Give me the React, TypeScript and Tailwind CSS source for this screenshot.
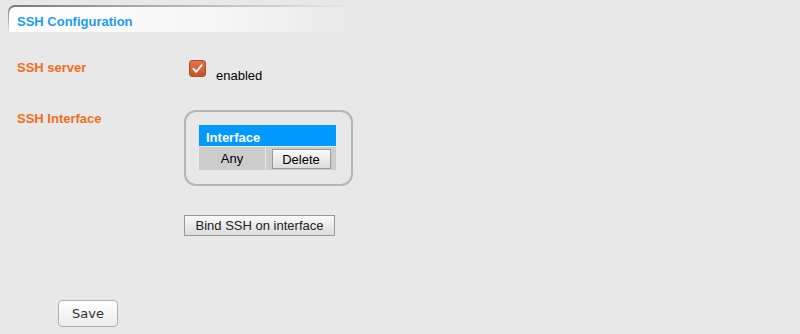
import React from 'react';

function Check() {
  return (
    <span className="flex h-[17px] w-[17px] items-center justify-center rounded-[3px] border border-[#a8502e] bg-gradient-to-b from-[#e0744a] to-[#c5532c]">
      <svg viewBox="0 0 16 16" className="h-[13px] w-[13px]">
        <path d="M3 8.5 L6.5 12 L13 4" fill="none" stroke="#fff" strokeWidth="2.4" strokeLinecap="round" strokeLinejoin="round" />
      </svg>
    </span>
  );
}

export default function App() {
  return (
    <div className="h-[334px] w-[800px] bg-[#e8e8e8] font-['Liberation_Sans',Arial,sans-serif] text-[13px] text-black">
      {/* title tab: border fades out to the right and downward */}
      <div className="pl-[8px] pt-[5px]">
        <div className="h-[27px] w-[345px] rounded-tl-[7px] bg-[linear-gradient(to_bottom,transparent_8%,#e8e8e8),linear-gradient(to_right,#777,#a0a0a0_30%,#c4c4c4_65%,#e8e8e8)] pl-[1px] pt-[2px]">
          <div className="h-full rounded-tl-[6px] bg-[linear-gradient(to_right,#ffffff,#f6f6f6_60%,#e8e8e8)] pl-[8px] pt-[5px]">
            <span className="text-[13px] font-bold text-[#1a9bf4]">SSH Configuration</span>
          </div>
        </div>
      </div>

      <div className="flex flex-col pl-[17px] pt-[26px]">
        <div className="flex h-[51px]">
          <div className="w-[172px] font-bold text-[#f26d1c]">SSH server</div>
          <div className="flex items-start gap-[10px] pt-[2px]">
            <Check />
            <span className="pt-[6px]">enabled</span>
          </div>
        </div>

        <div className="flex">
          <div className="w-[167px] font-bold text-[#f26d1c]">SSH Interface</div>
          <div className="mt-[1px] flex flex-col">
            <div className="h-[76px] w-[169px] rounded-[12px] border-2 border-[#b5b5b5] px-[13px] pt-[13px]">
              <div className="h-[21px] w-[137px] bg-[#0099ff] pl-[7px] pt-[3px] font-bold text-white">Interface</div>
              <div className="mt-[1px] flex h-[23px] w-[137px] gap-[1px]">
                <div className="flex w-[66px] items-center justify-center bg-[#cccccc]">Any</div>
                <div className="flex flex-1 items-center justify-center bg-[#cccccc]">
                  <button className="h-[20px] w-[59px] border border-[#999] bg-gradient-to-b from-[#fafafa] to-[#dcdcdc] text-[13px]">Delete</button>
                </div>
              </div>
            </div>
            <button className="mt-[29px] h-[21px] w-[151px] border border-[#999] bg-gradient-to-b from-[#fafafa] to-[#dcdcdc] text-[13px] leading-[19px] text-[#222]">
              Bind SSH on interface
            </button>
          </div>
        </div>

        <div className="pl-[41px] pt-[64px]">
          <button className="h-[27px] w-[60px] rounded-[4px] border border-[#b0b0b0] bg-gradient-to-b from-white to-[#ececec] font-['DejaVu_Sans',sans-serif] text-[13px] text-[#333]">
            Save
          </button>
        </div>
      </div>
    </div>
  );
}
